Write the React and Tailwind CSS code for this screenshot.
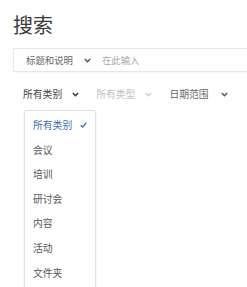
import React from 'react'

const font = { fontFamily: '"Noto Sans CJK SC", "Noto Sans", sans-serif' }

// small chevron used in the filter bar
function Chevron({ className = 'text-[#444]' }) {
  return (
    <svg width="7" height="5" viewBox="0 0 7 5" className={className}>
      <path d="M0.8 0.9 L3.5 3.8 L6.2 0.9" fill="none" stroke="currentColor" strokeWidth="1.4" />
    </svg>
  )
}

const categories = ['会议', '培训', '研讨会', '内容', '活动', '文件夹']

export default function App() {
  return (
    <div className="w-[247px] h-[287px] overflow-hidden bg-white pl-[13px]" style={font}>
      <h1 className="pt-[15px] text-[20px] leading-[20px] text-[#3a3a3a] font-normal">搜索</h1>

      {/* search bar */}
      <div className="mt-[13px] h-[24px] w-[260px] flex items-center border border-[#e6e6e6] shadow-[0_1px_2px_rgba(0,0,0,0.04)] pl-[12px]">
        <span className="text-[9.4px] text-[#666]">标题和说明</span>
        <span className="ml-[11px]">
          <Chevron className="text-[#555]" />
        </span>
        <span className="ml-[11px] text-[9.4px] text-[#aaa]">在此输入</span>
      </div>

      {/* filters */}
      <div className="mt-[12px] h-[20px] flex items-center pl-[10px] text-[9.8px]">
        <span className="text-[#444]">所有类别</span>
        <span className="ml-[10px]">
          <Chevron className="text-[#333]" />
        </span>
        <span className="ml-[17px] text-[#c2c2c2]">所有类型</span>
        <span className="ml-[10px]">
          <Chevron className="text-[#cfcfcf]" />
        </span>
        <span className="ml-[17px] text-[#666]">日期范围</span>
        <span className="ml-[12px]">
          <Chevron className="text-[#555]" />
        </span>
      </div>

      {/* dropdown */}
      <div className="mt-[6px] ml-[11px] w-[72px] h-[200px] border border-[#e2e2e2] rounded-[2px] shadow-[0_1px_3px_rgba(0,0,0,0.08)] pt-[2px] text-[9.8px]">
        <div className="h-[24.6px] flex items-center pl-[8px] text-[#3b6fb6]">
          <span>所有类别</span>
          <svg width="7" height="6" viewBox="0 0 7 6" className="ml-[8px]">
            <path d="M0.7 3.2 L2.6 5 L6.3 0.8" fill="none" stroke="#3b6fb6" strokeWidth="1.3" />
          </svg>
        </div>
        {categories.map((c) => (
          <div key={c} className="h-[24.6px] flex items-center pl-[8px] text-[#555]">
            {c}
          </div>
        ))}
      </div>
    </div>
  )
}
